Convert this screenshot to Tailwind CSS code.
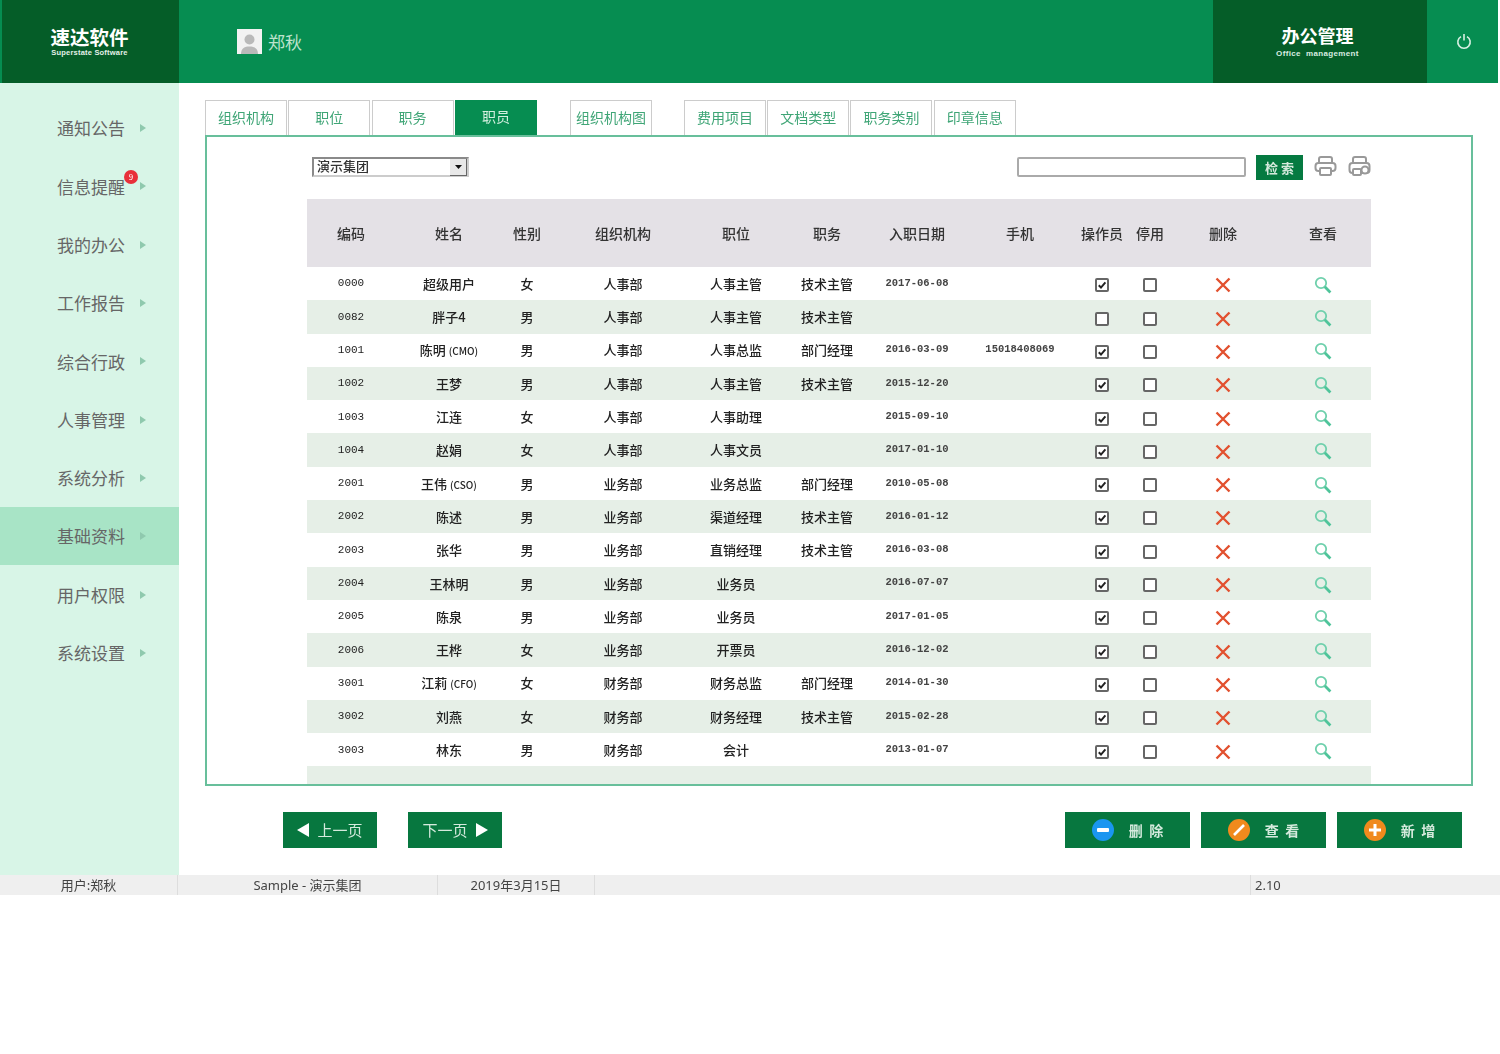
<!DOCTYPE html>
<html lang="zh-CN">
<head>
<meta charset="utf-8">
<title>速达软件 - 办公管理</title>
<script src="https://cdn.jsdelivr.net/npm/@tailwindcss/browser@4"></script>
</head>
<body class="bg-white">
<svg width="0" height="0" class="absolute">
  <symbol id="on" viewBox="0 0 14 14"><rect x="1" y="1" width="12" height="12" rx="1" fill="#fff" stroke="#666" stroke-width="2"/><path d="M3.8 7.2 6 9.6 10.4 4.4" fill="none" stroke="#222" stroke-width="2"/></symbol>
  <symbol id="off" viewBox="0 0 14 14"><rect x="1" y="1" width="12" height="12" rx="1" fill="#fff" stroke="#666" stroke-width="2"/></symbol>
  <symbol id="del" viewBox="0 0 16 16"><path d="M1.5 1.5 14.5 14.5M14.5 1.5 1.5 14.5" stroke="#e2512f" stroke-width="2.4" fill="none"/></symbol>
  <symbol id="see" viewBox="0 0 18 18"><circle cx="7" cy="7" r="5.2" fill="none" stroke="#6fd0ac" stroke-width="1.8"/><path d="M10.8 10.8 16.4 16.4" stroke="#4fc49a" stroke-width="2.8"/></symbol>
  <symbol id="tri" viewBox="0 0 6 8"><path d="M0 0 6 4 0 8Z" fill="#8fc9ae"/></symbol>
</svg>

<div class="w-[1500px] h-[895px] flex flex-col blur-[0.7px] font-['Noto_Sans_CJK_SC','Noto_Sans',sans-serif] overflow-hidden">
  <header class="h-[83px] w-[1498px] bg-[#068d51] flex items-stretch text-white shrink-0">
    <div class="w-[177px] ml-[2px] bg-[#055d28] flex flex-col items-center justify-center pr-[2px]">
      <div class="text-[19.500px] leading-[22px] font-bold">速达软件</div>
      <div class="text-[7.500px] leading-[9px] font-bold font-['Liberation_Sans',sans-serif] tracking-[0.2px] text-[#e4f1e9]">Superstate Software</div>
    </div>
    <div class="flex items-center pl-[58px] gap-[6px] flex-1">
      <div class="w-[25px] h-[25px] bg-[#f2f2f2] flex items-end justify-center">
        <svg width="19" height="21" viewBox="0 0 19 21"><circle cx="9.5" cy="6.5" r="5" fill="#b9b9b9"/><path d="M1 21c0-6 4-7.500 8.500-7.500S18 15 18 21Z" fill="#b9b9b9"/></svg>
      </div>
      <span class="text-[17px] text-[#bde3cd]">郑秋</span>
    </div>
    <div class="w-[214px] bg-[#055d28] flex flex-col items-center justify-center pr-[5px]">
      <div class="text-[18px] leading-[24px] -mt-[2px] font-bold">办公管理</div>
      <div class="text-[8px] leading-[10px] mt-[2px] font-bold font-['Liberation_Sans',sans-serif] tracking-[0.35px] text-[#d9ece1]">Office&nbsp; management</div>
    </div>
    <div class="w-[71px] flex items-center justify-center pl-[3px]">
      <svg width="16" height="17" viewBox="0 0 16 17" fill="none" stroke="#d8f0e3" stroke-width="1.6"><path d="M5 3.600a6.200 6.200 0 1 0 6 0"/><path d="M8 1v6.500"/></svg>
    </div>
  </header>

  <div class="flex flex-1 min-h-0">
    <aside class="w-[179px] bg-[#d8f5e7] pt-4 text-[17px] text-[#666] shrink-0">
      <div class="h-[58.3px] flex items-center pl-[57px] gap-[15px]"><span>通知公告</span><svg class="w-[6px] h-[8px]"><use href="#tri"/></svg></div>
      <div class="h-[58.3px] flex items-center pl-[57px] gap-[15px] relative"><span>信息提醒</span><svg class="w-[6px] h-[8px]"><use href="#tri"/></svg><span class="absolute left-[124px] top-[13px] w-[14px] h-[14px] rounded-full bg-[#e8303a] text-white text-[8px] leading-[14px] text-center">9</span></div>
      <div class="h-[58.3px] flex items-center pl-[57px] gap-[15px]"><span>我的办公</span><svg class="w-[6px] h-[8px]"><use href="#tri"/></svg></div>
      <div class="h-[58.3px] flex items-center pl-[57px] gap-[15px]"><span>工作报告</span><svg class="w-[6px] h-[8px]"><use href="#tri"/></svg></div>
      <div class="h-[58.3px] flex items-center pl-[57px] gap-[15px]"><span>综合行政</span><svg class="w-[6px] h-[8px]"><use href="#tri"/></svg></div>
      <div class="h-[58.3px] flex items-center pl-[57px] gap-[15px]"><span>人事管理</span><svg class="w-[6px] h-[8px]"><use href="#tri"/></svg></div>
      <div class="h-[58.3px] flex items-center pl-[57px] gap-[15px]"><span>系统分析</span><svg class="w-[6px] h-[8px]"><use href="#tri"/></svg></div>
      <div class="h-[58.3px] flex items-center pl-[57px] gap-[15px] bg-[#a8e4c6]"><span>基础资料</span><svg class="w-[6px] h-[8px]"><use href="#tri"/></svg></div>
      <div class="h-[58.3px] flex items-center pl-[57px] gap-[15px]"><span>用户权限</span><svg class="w-[6px] h-[8px]"><use href="#tri"/></svg></div>
      <div class="h-[58.3px] flex items-center pl-[57px] gap-[15px]"><span>系统设置</span><svg class="w-[6px] h-[8px]"><use href="#tri"/></svg></div>
    </aside>

    <main class="flex-1 pl-[26px] pr-[27px] pt-[17px] min-w-0">
      <nav class="flex h-[35px] text-[14px] text-[#3fa576] relative z-10">
        <div class="w-[82px] pb-[2px] border border-b-0 border-[#ccc] flex items-center justify-center">组织机构</div>
        <div class="w-[82px] pb-[2px] ml-[1.300px] border border-b-0 border-[#ccc] flex items-center justify-center">职位</div>
        <div class="w-[82px] pb-[2px] ml-[1.300px] border border-b-0 border-[#ccc] flex items-center justify-center">职务</div>
        <div class="w-[82px] pb-[2px] ml-[1.300px] bg-[#068d51] text-[#d3efdf] flex items-center justify-center">职员</div>
        <div class="w-[82px] pb-[2px] ml-[33px] border border-b-0 border-[#ccc] flex items-center justify-center whitespace-nowrap">组织机构图</div>
        <div class="w-[82px] pb-[2px] ml-[32px] border border-b-0 border-[#ccc] flex items-center justify-center">费用项目</div>
        <div class="w-[82px] pb-[2px] ml-[1.300px] border border-b-0 border-[#ccc] flex items-center justify-center">文档类型</div>
        <div class="w-[82px] pb-[2px] ml-[1.300px] border border-b-0 border-[#ccc] flex items-center justify-center">职务类别</div>
        <div class="w-[82px] pb-[2px] ml-[1.300px] border border-b-0 border-[#ccc] flex items-center justify-center">印章信息</div>
      </nav>

      <section class="h-[651px] border-2 border-[#68bf9b] overflow-hidden">
        <div class="flex items-start h-[62px] pt-[20px] pl-[105px] pr-[100px]">
          <div class="w-[157px] h-[20px] border-2 border-[#8a8a8a] border-r-[#ccc] border-b-[#ccc] flex items-center justify-between text-[13px] font-medium text-[#333] pl-[3px]">
            <span class="-mt-[2px]">演示集团</span>
            <span class="w-[17px] h-[17px] bg-[#e8e8e8] border-b border-r border-[#666] flex items-center justify-center"><svg width="7" height="4" viewBox="0 0 7 4"><path d="M0 0h7L3.500 4Z" fill="#111"/></svg></span>
          </div>
          <div class="ml-auto w-[229px] h-[20px] border-2 border-[#aaa] rounded-[2px] bg-white"></div>
          <div class="ml-[10px] -mt-[2px] w-[47px] h-[25px] bg-[#057a41] text-[#d5eadd] text-[13px] font-bold flex items-center justify-center">检 索</div>
          <svg class="ml-[11px] -mt-[2px]" width="23" height="22" viewBox="0 0 23 22" fill="none" stroke="#999" stroke-width="2"><path d="M5 8V4q0-2 2-2h9q2 0 2 2v4"/><rect x="1.500" y="8" width="20" height="8" rx="3"/><rect x="6" y="13" width="11" height="7" rx="1" fill="#fff"/></svg>
          <svg class="ml-[11px] -mt-[2px]" width="23" height="22" viewBox="0 0 23 22" fill="none" stroke="#999" stroke-width="2"><path d="M5 8V4q0-2 2-2h9q2 0 2 2v4"/><rect x="1.500" y="8" width="20" height="10" rx="3"/><rect x="5" y="14" width="8" height="6" rx="1" fill="#fff"/><circle cx="17" cy="15" r="3.500" fill="#fff"/></svg>
        </div>

        <table class="ml-[100px] w-[1064px] table-fixed border-collapse text-[13px] font-medium text-[#222] text-center">
          <colgroup>
            <col class="w-[88px]"><col class="w-[108px]"><col class="w-[48px]"><col class="w-[144px]"><col class="w-[82px]"><col class="w-[100px]"><col class="w-[80px]"><col class="w-[126px]"><col class="w-[38px]"><col class="w-[58px]"><col class="w-[88px]"><col class="w-[104px]">
          </colgroup>
          <thead>
            <tr class="h-[68px] bg-[#e4e1e6] text-[14px] text-[#333]">
              <th class="font-medium">编码</th><th class="font-medium">姓名</th><th class="font-medium">性别</th><th class="font-medium">组织机构</th><th class="font-medium">职位</th><th class="font-medium">职务</th><th class="font-medium">入职日期</th><th class="font-medium">手机</th><th class="font-medium"><span class="inline-block -mx-1 whitespace-nowrap">操作员</span></th><th class="font-medium">停用</th><th class="font-medium">删除</th><th class="font-medium pl-2">查看</th>
            </tr>
          </thead>
          <tbody class="[&_svg]:inline-block [&_svg]:align-middle [&_tr]:h-[33.3px] [&_tr:nth-child(even)]:bg-[#e6efe7]">
            <tr><td class="font-['Liberation_Mono',monospace] text-[11px]">0000</td><td>超级用户</td><td>女</td><td>人事部</td><td>人事主管</td><td>技术主管</td><td class="font-['Liberation_Mono',monospace] font-bold text-[10.5px] text-[#444]">2017-06-08</td><td class="font-['Liberation_Mono',monospace] font-bold text-[10.5px] text-[#444]"></td><td><svg class="w-[14px] h-[14px]"><use href="#on"/></svg></td><td><svg class="w-[14px] h-[14px]"><use href="#off"/></svg></td><td><svg class="w-[16px] h-[16px]"><use href="#del"/></svg></td><td class="pl-2"><svg class="w-[18px] h-[18px]"><use href="#see"/></svg></td></tr>
            <tr><td class="font-['Liberation_Mono',monospace] text-[11px]">0082</td><td>胖子4</td><td>男</td><td>人事部</td><td>人事主管</td><td>技术主管</td><td class="font-['Liberation_Mono',monospace] font-bold text-[10.5px] text-[#444]"></td><td class="font-['Liberation_Mono',monospace] font-bold text-[10.5px] text-[#444]"></td><td><svg class="w-[14px] h-[14px]"><use href="#off"/></svg></td><td><svg class="w-[14px] h-[14px]"><use href="#off"/></svg></td><td><svg class="w-[16px] h-[16px]"><use href="#del"/></svg></td><td class="pl-2"><svg class="w-[18px] h-[18px]"><use href="#see"/></svg></td></tr>
            <tr><td class="font-['Liberation_Mono',monospace] text-[11px]">1001</td><td>陈明 <span class="text-[10px]">(CMO)</span></td><td>男</td><td>人事部</td><td>人事总监</td><td>部门经理</td><td class="font-['Liberation_Mono',monospace] font-bold text-[10.5px] text-[#444]">2016-03-09</td><td class="font-['Liberation_Mono',monospace] font-bold text-[10.5px] text-[#444]">15018408069</td><td><svg class="w-[14px] h-[14px]"><use href="#on"/></svg></td><td><svg class="w-[14px] h-[14px]"><use href="#off"/></svg></td><td><svg class="w-[16px] h-[16px]"><use href="#del"/></svg></td><td class="pl-2"><svg class="w-[18px] h-[18px]"><use href="#see"/></svg></td></tr>
            <tr><td class="font-['Liberation_Mono',monospace] text-[11px]">1002</td><td>王梦</td><td>男</td><td>人事部</td><td>人事主管</td><td>技术主管</td><td class="font-['Liberation_Mono',monospace] font-bold text-[10.5px] text-[#444]">2015-12-20</td><td class="font-['Liberation_Mono',monospace] font-bold text-[10.5px] text-[#444]"></td><td><svg class="w-[14px] h-[14px]"><use href="#on"/></svg></td><td><svg class="w-[14px] h-[14px]"><use href="#off"/></svg></td><td><svg class="w-[16px] h-[16px]"><use href="#del"/></svg></td><td class="pl-2"><svg class="w-[18px] h-[18px]"><use href="#see"/></svg></td></tr>
            <tr><td class="font-['Liberation_Mono',monospace] text-[11px]">1003</td><td>江连</td><td>女</td><td>人事部</td><td>人事助理</td><td></td><td class="font-['Liberation_Mono',monospace] font-bold text-[10.5px] text-[#444]">2015-09-10</td><td class="font-['Liberation_Mono',monospace] font-bold text-[10.5px] text-[#444]"></td><td><svg class="w-[14px] h-[14px]"><use href="#on"/></svg></td><td><svg class="w-[14px] h-[14px]"><use href="#off"/></svg></td><td><svg class="w-[16px] h-[16px]"><use href="#del"/></svg></td><td class="pl-2"><svg class="w-[18px] h-[18px]"><use href="#see"/></svg></td></tr>
            <tr><td class="font-['Liberation_Mono',monospace] text-[11px]">1004</td><td>赵娟</td><td>女</td><td>人事部</td><td>人事文员</td><td></td><td class="font-['Liberation_Mono',monospace] font-bold text-[10.5px] text-[#444]">2017-01-10</td><td class="font-['Liberation_Mono',monospace] font-bold text-[10.5px] text-[#444]"></td><td><svg class="w-[14px] h-[14px]"><use href="#on"/></svg></td><td><svg class="w-[14px] h-[14px]"><use href="#off"/></svg></td><td><svg class="w-[16px] h-[16px]"><use href="#del"/></svg></td><td class="pl-2"><svg class="w-[18px] h-[18px]"><use href="#see"/></svg></td></tr>
            <tr><td class="font-['Liberation_Mono',monospace] text-[11px]">2001</td><td>王伟 <span class="text-[10px]">(CSO)</span></td><td>男</td><td>业务部</td><td>业务总监</td><td>部门经理</td><td class="font-['Liberation_Mono',monospace] font-bold text-[10.5px] text-[#444]">2010-05-08</td><td class="font-['Liberation_Mono',monospace] font-bold text-[10.5px] text-[#444]"></td><td><svg class="w-[14px] h-[14px]"><use href="#on"/></svg></td><td><svg class="w-[14px] h-[14px]"><use href="#off"/></svg></td><td><svg class="w-[16px] h-[16px]"><use href="#del"/></svg></td><td class="pl-2"><svg class="w-[18px] h-[18px]"><use href="#see"/></svg></td></tr>
            <tr><td class="font-['Liberation_Mono',monospace] text-[11px]">2002</td><td>陈述</td><td>男</td><td>业务部</td><td>渠道经理</td><td>技术主管</td><td class="font-['Liberation_Mono',monospace] font-bold text-[10.5px] text-[#444]">2016-01-12</td><td class="font-['Liberation_Mono',monospace] font-bold text-[10.5px] text-[#444]"></td><td><svg class="w-[14px] h-[14px]"><use href="#on"/></svg></td><td><svg class="w-[14px] h-[14px]"><use href="#off"/></svg></td><td><svg class="w-[16px] h-[16px]"><use href="#del"/></svg></td><td class="pl-2"><svg class="w-[18px] h-[18px]"><use href="#see"/></svg></td></tr>
            <tr><td class="font-['Liberation_Mono',monospace] text-[11px]">2003</td><td>张华</td><td>男</td><td>业务部</td><td>直销经理</td><td>技术主管</td><td class="font-['Liberation_Mono',monospace] font-bold text-[10.5px] text-[#444]">2016-03-08</td><td class="font-['Liberation_Mono',monospace] font-bold text-[10.5px] text-[#444]"></td><td><svg class="w-[14px] h-[14px]"><use href="#on"/></svg></td><td><svg class="w-[14px] h-[14px]"><use href="#off"/></svg></td><td><svg class="w-[16px] h-[16px]"><use href="#del"/></svg></td><td class="pl-2"><svg class="w-[18px] h-[18px]"><use href="#see"/></svg></td></tr>
            <tr><td class="font-['Liberation_Mono',monospace] text-[11px]">2004</td><td>王林明</td><td>男</td><td>业务部</td><td>业务员</td><td></td><td class="font-['Liberation_Mono',monospace] font-bold text-[10.5px] text-[#444]">2016-07-07</td><td class="font-['Liberation_Mono',monospace] font-bold text-[10.5px] text-[#444]"></td><td><svg class="w-[14px] h-[14px]"><use href="#on"/></svg></td><td><svg class="w-[14px] h-[14px]"><use href="#off"/></svg></td><td><svg class="w-[16px] h-[16px]"><use href="#del"/></svg></td><td class="pl-2"><svg class="w-[18px] h-[18px]"><use href="#see"/></svg></td></tr>
            <tr><td class="font-['Liberation_Mono',monospace] text-[11px]">2005</td><td>陈泉</td><td>男</td><td>业务部</td><td>业务员</td><td></td><td class="font-['Liberation_Mono',monospace] font-bold text-[10.5px] text-[#444]">2017-01-05</td><td class="font-['Liberation_Mono',monospace] font-bold text-[10.5px] text-[#444]"></td><td><svg class="w-[14px] h-[14px]"><use href="#on"/></svg></td><td><svg class="w-[14px] h-[14px]"><use href="#off"/></svg></td><td><svg class="w-[16px] h-[16px]"><use href="#del"/></svg></td><td class="pl-2"><svg class="w-[18px] h-[18px]"><use href="#see"/></svg></td></tr>
            <tr><td class="font-['Liberation_Mono',monospace] text-[11px]">2006</td><td>王桦</td><td>女</td><td>业务部</td><td>开票员</td><td></td><td class="font-['Liberation_Mono',monospace] font-bold text-[10.5px] text-[#444]">2016-12-02</td><td class="font-['Liberation_Mono',monospace] font-bold text-[10.5px] text-[#444]"></td><td><svg class="w-[14px] h-[14px]"><use href="#on"/></svg></td><td><svg class="w-[14px] h-[14px]"><use href="#off"/></svg></td><td><svg class="w-[16px] h-[16px]"><use href="#del"/></svg></td><td class="pl-2"><svg class="w-[18px] h-[18px]"><use href="#see"/></svg></td></tr>
            <tr><td class="font-['Liberation_Mono',monospace] text-[11px]">3001</td><td>江莉 <span class="text-[10px]">(CFO)</span></td><td>女</td><td>财务部</td><td>财务总监</td><td>部门经理</td><td class="font-['Liberation_Mono',monospace] font-bold text-[10.5px] text-[#444]">2014-01-30</td><td class="font-['Liberation_Mono',monospace] font-bold text-[10.5px] text-[#444]"></td><td><svg class="w-[14px] h-[14px]"><use href="#on"/></svg></td><td><svg class="w-[14px] h-[14px]"><use href="#off"/></svg></td><td><svg class="w-[16px] h-[16px]"><use href="#del"/></svg></td><td class="pl-2"><svg class="w-[18px] h-[18px]"><use href="#see"/></svg></td></tr>
            <tr><td class="font-['Liberation_Mono',monospace] text-[11px]">3002</td><td>刘燕</td><td>女</td><td>财务部</td><td>财务经理</td><td>技术主管</td><td class="font-['Liberation_Mono',monospace] font-bold text-[10.5px] text-[#444]">2015-02-28</td><td class="font-['Liberation_Mono',monospace] font-bold text-[10.5px] text-[#444]"></td><td><svg class="w-[14px] h-[14px]"><use href="#on"/></svg></td><td><svg class="w-[14px] h-[14px]"><use href="#off"/></svg></td><td><svg class="w-[16px] h-[16px]"><use href="#del"/></svg></td><td class="pl-2"><svg class="w-[18px] h-[18px]"><use href="#see"/></svg></td></tr>
            <tr><td class="font-['Liberation_Mono',monospace] text-[11px]">3003</td><td>林东</td><td>男</td><td>财务部</td><td>会计</td><td></td><td class="font-['Liberation_Mono',monospace] font-bold text-[10.5px] text-[#444]">2013-01-07</td><td class="font-['Liberation_Mono',monospace] font-bold text-[10.5px] text-[#444]"></td><td><svg class="w-[14px] h-[14px]"><use href="#on"/></svg></td><td><svg class="w-[14px] h-[14px]"><use href="#off"/></svg></td><td><svg class="w-[16px] h-[16px]"><use href="#del"/></svg></td><td class="pl-2"><svg class="w-[18px] h-[18px]"><use href="#see"/></svg></td></tr>
            <tr><td colspan="12"></td></tr>
          </tbody>
        </table>
      </section>

      <div class="mt-[26px] flex pl-[78px] pr-[11px] h-[36px] text-[#d5eadd]">
        <div class="w-[94px] bg-[#07773f] flex items-center justify-center gap-[8px] text-[15px]"><svg width="12" height="14" viewBox="0 0 12 14"><path d="M12 0V14L0 7Z" fill="#fff"/></svg>上一页</div>
        <div class="w-[94px] ml-[31px] bg-[#07773f] flex items-center justify-center gap-[8px] text-[15px]">下一页<svg width="12" height="14" viewBox="0 0 12 14"><path d="M0 0V14L12 7Z" fill="#fff"/></svg></div>
        <div class="w-[125px] ml-auto bg-[#07773f] flex items-center justify-center gap-[15px] text-[14px] font-bold">
          <svg width="22" height="22" viewBox="0 0 22 22"><circle cx="11" cy="11" r="11" fill="#1a96f0"/><rect x="5" y="9" width="12" height="4" rx="1" fill="#fff"/></svg><span class="whitespace-pre">删  除</span></div>
        <div class="w-[125px] ml-[11px] bg-[#07773f] flex items-center justify-center gap-[15px] text-[14px] font-bold">
          <svg width="22" height="22" viewBox="0 0 22 22"><circle cx="11" cy="11" r="11" fill="#f08a1d"/><path d="M6 16 16 6" stroke="#fff" stroke-width="2.600"/></svg><span class="whitespace-pre">查  看</span></div>
        <div class="w-[125px] ml-[11px] bg-[#07773f] flex items-center justify-center gap-[15px] text-[14px] font-bold">
          <svg width="22" height="22" viewBox="0 0 22 22"><circle cx="11" cy="11" r="11" fill="#f08a1d"/><path d="M11 5V17M5 11H17" stroke="#fff" stroke-width="3"/></svg><span class="whitespace-pre">新  增</span></div>
      </div>
    </main>
  </div>

  <footer class="h-5 bg-[#efefef] flex text-[13px] leading-5 text-[#444] shrink-0">
    <div class="w-[178px] border-r border-[#ddd] text-center">用户:郑秋</div>
    <div class="w-[260px] border-r border-[#ddd] text-center font-['Noto_Sans','Noto_Sans_CJK_SC',sans-serif]">Sample - 演示集团</div>
    <div class="w-[157px] border-r border-[#ddd] text-center font-['Noto_Sans','Noto_Sans_CJK_SC',sans-serif]">2019年3月15日</div>
    <div class="w-[656px] border-r border-[#ddd]"></div>
    <div class="pl-[4px] font-['Noto_Sans',sans-serif]">2.10</div>
  </footer>
</div>
</body>
</html>
